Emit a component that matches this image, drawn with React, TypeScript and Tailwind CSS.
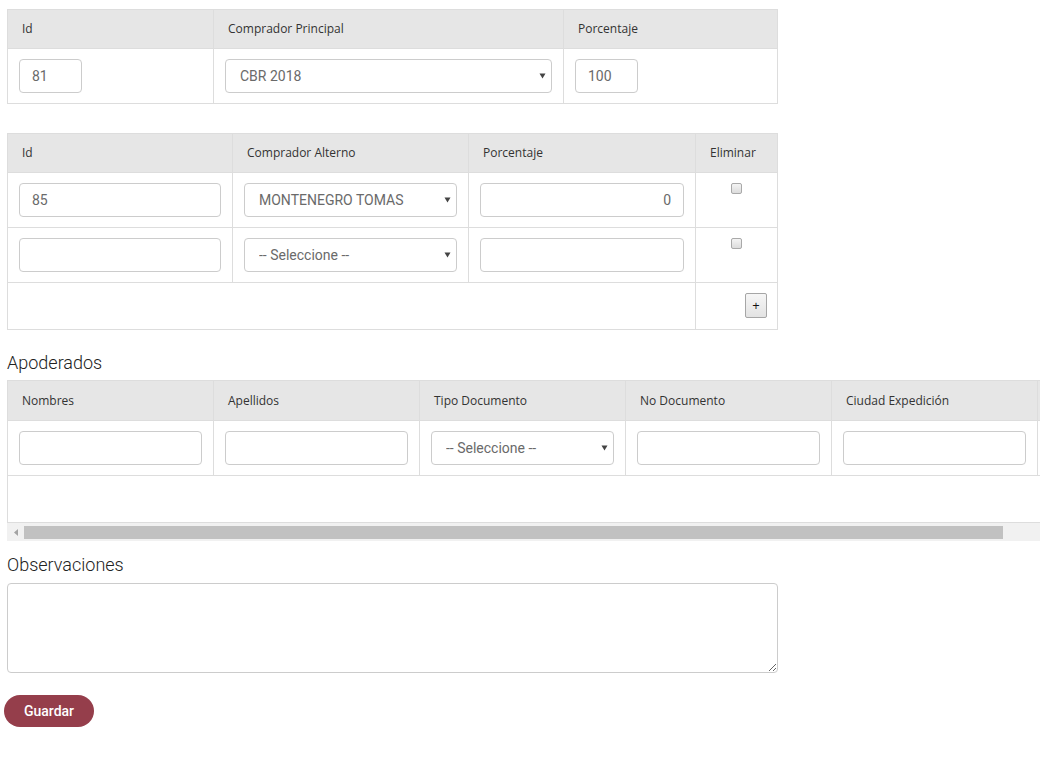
import React from "react";

const HEAD = "h-[39px] border border-[#dddddd] bg-[#e6e6e6] px-[14px] text-left align-middle font-['Open_Sans',sans-serif] text-[12px] font-normal text-[#333]";
const CELL = "border border-[#dddddd] px-[11px] py-[10px] align-top";
const INPUT = "block h-[34px] rounded-[4px] border border-[#cccccc] bg-white px-[12px] font-['Roboto',sans-serif] text-[14px] font-normal text-[#6a6a6a] outline-none";

function Select({ value, className = "" }: { value: string; className?: string }) {
  return (
    <div className={`relative ${className}`}>
      <select
        defaultValue={value}
        className="block h-[34px] w-full appearance-none rounded-[4px] border border-[#cccccc] bg-white pl-[14px] pr-6 font-['Roboto',sans-serif] text-[14px] font-normal text-[#6a6a6a] outline-none"
      >
        <option>{value}</option>
      </select>
      <svg className="pointer-events-none absolute right-[6px] top-[14px]" width="7" height="6" viewBox="0 0 7 6">
        <polygon points="0.5,0.5 6.5,0.5 3.5,5.5" fill="#444" />
      </svg>
    </div>
  );
}

function Check() {
  return (
    <input
      type="checkbox"
      className="mx-auto block h-[11px] w-[11px] appearance-none rounded-[2px] border border-[#a9a9a9] bg-gradient-to-b from-[#f4f4f4] to-[#dcdcdc]"
    />
  );
}

export default function App() {
  return (
    <div className="min-h-screen bg-white pl-[7px] pt-[9px] font-['Roboto',sans-serif] text-[#333]">
      {/* Comprador principal */}
      <table className="w-[771px] table-fixed border-collapse border border-[#dddddd]">
        <colgroup>
          <col className="w-[206px]" />
          <col className="w-[350px]" />
          <col />
        </colgroup>
        <thead>
          <tr>
            <th className={HEAD}>Id</th>
            <th className={HEAD}>Comprador Principal</th>
            <th className={HEAD}>Porcentaje</th>
          </tr>
        </thead>
        <tbody>
          <tr>
            <td className={CELL}>
              <input className={`${INPUT} w-[63px]`} defaultValue="81" />
            </td>
            <td className={CELL}>
              <Select value="CBR 2018" />
            </td>
            <td className={CELL}>
              <input className={`${INPUT} w-[63px]`} defaultValue="100" />
            </td>
          </tr>
        </tbody>
      </table>

      {/* Compradores alternos */}
      <table className="mt-[29px] w-[771px] table-fixed border-collapse border border-[#dddddd]">
        <colgroup>
          <col className="w-[225px]" />
          <col className="w-[236px]" />
          <col className="w-[227px]" />
          <col />
        </colgroup>
        <thead>
          <tr>
            <th className={HEAD}>Id</th>
            <th className={HEAD}>Comprador Alterno</th>
            <th className={HEAD}>Porcentaje</th>
            <th className={HEAD}>Eliminar</th>
          </tr>
        </thead>
        <tbody>
          <tr>
            <td className={CELL}>
              <input className={`${INPUT} w-full`} defaultValue="85" />
            </td>
            <td className={CELL}>
              <Select value="MONTENEGRO TOMAS" />
            </td>
            <td className={CELL}>
              <input className={`${INPUT} w-full text-right`} defaultValue="0" />
            </td>
            <td className={CELL}>
              <Check />
            </td>
          </tr>
          <tr>
            <td className={CELL}>
              <input className={`${INPUT} w-full`} />
            </td>
            <td className={CELL}>
              <Select value="-- Seleccione --" />
            </td>
            <td className={CELL}>
              <input className={`${INPUT} w-full`} />
            </td>
            <td className={CELL}>
              <Check />
            </td>
          </tr>
          <tr>
            <td colSpan={3} className="h-[47px] border border-[#dddddd]"></td>
            <td className="border border-[#dddddd] px-[10px] pt-[10px] pb-[10px] align-top">
              <button className="ml-auto flex h-[25px] w-[22px] items-center justify-center rounded-[2px] border border-[#a6a6a6] bg-gradient-to-b from-[#f6f6f6] to-[#e3e3e3] font-['Open_Sans',sans-serif] text-[13px] leading-none text-[#111]">
                +
              </button>
            </td>
          </tr>
        </tbody>
      </table>

      {/* Apoderados */}
      <h3 className="mt-[23px] mb-[7px] text-[18px] leading-[20px] font-light text-[#222]">Apoderados</h3>
      <div className="overflow-hidden">
        <table className="w-[1060px] table-fixed border-collapse border border-[#dddddd]">
          <colgroup>
            <col className="w-[206px]" />
            <col className="w-[206px]" />
            <col className="w-[206px]" />
            <col className="w-[206px]" />
            <col className="w-[206px]" />
            <col />
          </colgroup>
          <thead>
            <tr>
              <th className={`${HEAD} h-[40px]`}>Nombres</th>
              <th className={`${HEAD} h-[40px]`}>Apellidos</th>
              <th className={`${HEAD} h-[40px]`}>Tipo Documento</th>
              <th className={`${HEAD} h-[40px]`}>No Documento</th>
              <th className={`${HEAD} h-[40px]`}>Ciudad Expedición</th>
              <th className={`${HEAD} h-[40px]`}></th>
            </tr>
          </thead>
          <tbody>
            <tr>
              <td className={CELL}>
                <input className={`${INPUT} w-full`} />
              </td>
              <td className={CELL}>
                <input className={`${INPUT} w-full`} />
              </td>
              <td className={CELL}>
                <Select value="-- Seleccione --" />
              </td>
              <td className={CELL}>
                <input className={`${INPUT} w-full`} />
              </td>
              <td className={CELL}>
                <input className={`${INPUT} w-full`} />
              </td>
              <td className={CELL}></td>
            </tr>
            <tr>
              <td colSpan={6} className="h-[47px] border border-[#dddddd]"></td>
            </tr>
          </tbody>
        </table>
        {/* horizontal scrollbar */}
        <div className="flex h-[18px] items-center bg-[#f1f1f1]">
          <div className="flex w-[17px] items-center justify-center">
            <svg width="4" height="7" viewBox="0 0 4 7">
              <polygon points="4,0 4,7 0,3.5" fill="#a3a3a3" />
            </svg>
          </div>
          <div className="h-[13px] w-[979px] bg-[#c1c1c1]"></div>
        </div>
      </div>

      {/* Observaciones */}
      <h3 className="mt-[14px] mb-[8px] text-[18px] leading-[20px] font-light text-[#222]">Observaciones</h3>
      <textarea className="block h-[90px] w-[771px] rounded-[4px] border border-[#cccccc] px-3 py-2 font-['Roboto',sans-serif] text-[14px] text-[#555] outline-none" />

      <button className="ml-[-3px] mt-[22px] h-[32px] w-[90px] rounded-full bg-[#953e4b] font-['Roboto',sans-serif] text-[14px] font-medium text-white">
        Guardar
      </button>
    </div>
  );
}
